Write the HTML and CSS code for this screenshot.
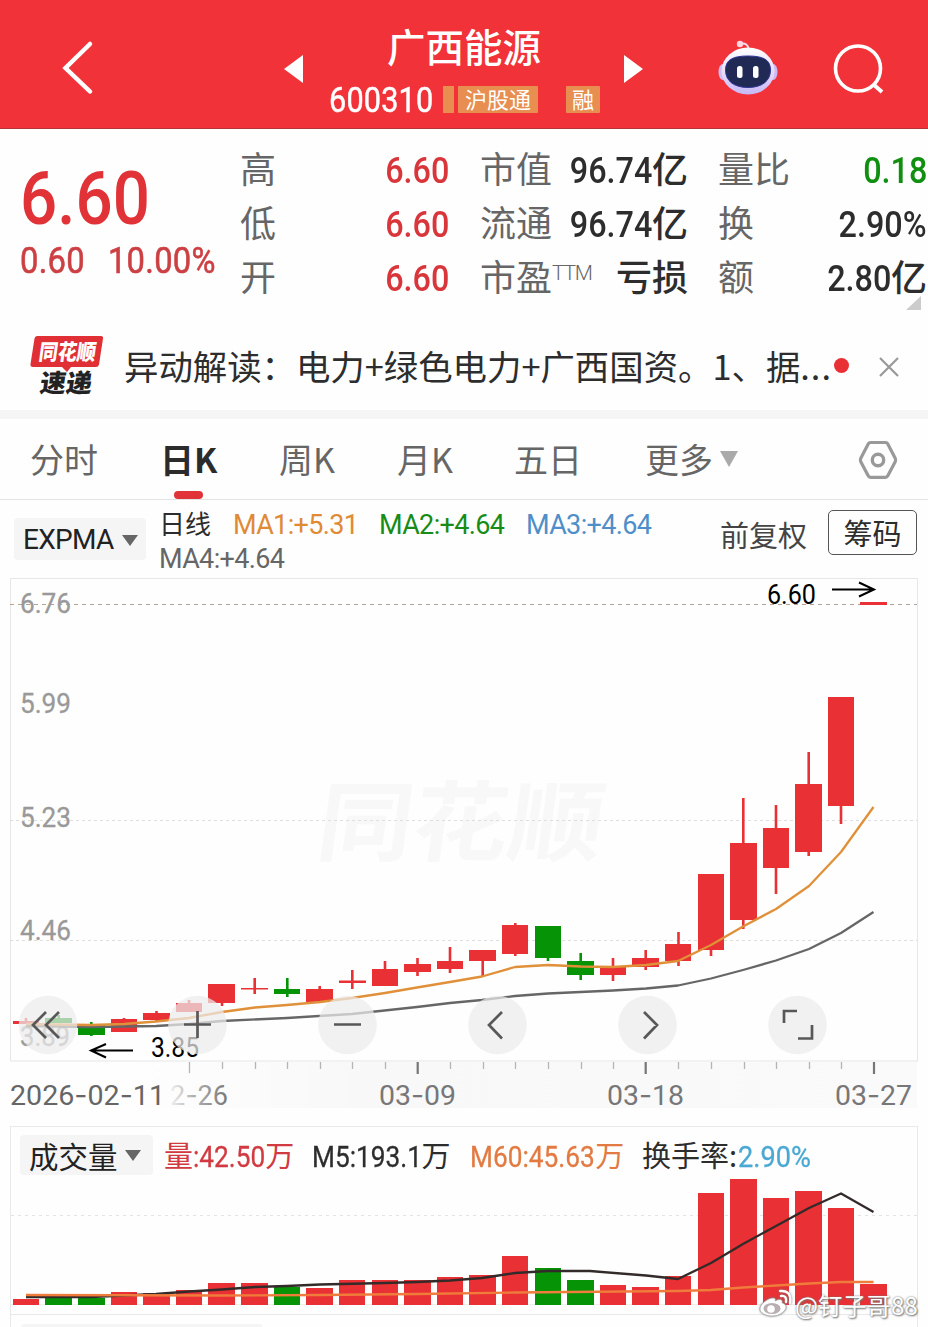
FILE: index.html
```html
<!DOCTYPE html>
<html lang="zh-CN">
<head>
<meta charset="utf-8">
<title>广西能源 600310</title>
<link rel="stylesheet" href="styles.css">
</head>
<body>
<div class="app">
<header class="top">
  <svg class="back" viewBox="0 0 40 60"><path d="M33 7 8.500 31 33 54.500" fill="none" stroke="#fff" stroke-width="4.500" stroke-linecap="round"/></svg>
  <svg class="prev" viewBox="0 0 20 28"><path d="M19 0v28L0 14z" fill="#fff"/></svg>
  <div class="title">
    <h1>广西能源</h1>
    <div class="sub"><span class="code">600310</span><i class="bar"></i><span class="tag wide">沪股通</span><span class="tag">融</span></div>
  </div>
  <svg class="next" viewBox="0 0 20 28"><path d="M0 0v28l19-14z" fill="#fff"/></svg>
  <svg class="robot" viewBox="0 0 60 56">
    <defs><linearGradient id="shell" x1="0" y1="0" x2="0" y2="1"><stop offset="0" stop-color="#fff"/><stop offset=".6" stop-color="#e4d6f6"/><stop offset="1" stop-color="#c4b8f8"/></linearGradient></defs>
    <path d="M22 4q8-2 9 6" fill="none" stroke="#f8dbe9" stroke-width="2"/><circle cx="22" cy="4" r="3.200" fill="#ffd3df"/>
    <ellipse cx="5" cy="32" rx="4.500" ry="8" fill="#cdbcf4"/><ellipse cx="55" cy="32" rx="4.500" ry="8" fill="#cdbcf4"/>
    <ellipse cx="30" cy="31" rx="26.500" ry="23.500" fill="url(#shell)"/>
    <path d="M7.500 30C7.500 19 16 16 30 16s22.500 3 22.500 14S44 47.500 30 47.500 7.500 41 7.500 30z" fill="#202a55" stroke="#30369a"/>
    <rect x="19" y="26" width="5.500" height="12" rx="2.500" fill="#fff"/><rect x="35" y="26" width="5.500" height="12" rx="2.500" fill="#fff"/>
  </svg>
  <svg class="search" viewBox="0 0 52 52"><circle cx="25" cy="24.500" r="22.500" fill="none" stroke="#fff" stroke-width="3.600"/><path d="m40 40 9 8" stroke="#fff" stroke-width="4"/></svg>
</header>

<section class="quote">
  <div class="price">
    <div class="last">6.60</div>
    <div class="change"><span>0.60</span><span>10.00%</span></div>
  </div>
  <dl class="col c1">
    <dt>高</dt><dd class="up"><b>6.60</b></dd>
    <dt>低</dt><dd class="up"><b>6.60</b></dd>
    <dt>开</dt><dd class="up"><b>6.60</b></dd>
  </dl>
  <dl class="col c2">
    <dt>市值</dt><dd><b>96.74</b>亿</dd>
    <dt>流通</dt><dd><b>96.74</b>亿</dd>
    <dt>市盈<sup>TTM</sup></dt><dd>亏损</dd>
  </dl>
  <dl class="col c3">
    <dt>量比</dt><dd class="down"><b>0.18</b></dd>
    <dt>换</dt><dd><b>2.90%</b></dd>
    <dt>额</dt><dd><b>2.80</b>亿</dd>
  </dl>
  <i class="corner"></i>
</section>

<section class="news">
  <svg class="logo" viewBox="28 332 76 66">
    <path d="M37 336h64q2.500 0 2 2.500l-4 26q-.5 2.500-3 2.500H71l-4 5-5-5H33q-3 0-2.500-3l4-25.500q.5-2.500 2.500-2.500z" fill="#e03036"/>
    <text transform="translate(38 360) skewX(-8)" textLength="57" lengthAdjust="spacingAndGlyphs" class="logo-a">同花顺</text>
    <text transform="translate(39 392) skewX(-8)" textLength="52" lengthAdjust="spacingAndGlyphs" class="logo-b">速递</text>
  </svg>
  <p>异动解读：电力+绿色电力+广西国资。1、据<span class="dots">...</span></p>
  <i class="dot"></i>
  <svg class="close" viewBox="0 0 22 22"><path d="m2 2 18 18M20 2 2 20" stroke="#999" stroke-width="2.200"/></svg>
</section>

<nav class="tabs">
  <span class="t1">分时</span><span class="t2 on">日K</span><span class="t3">周K</span><span class="t4">月K</span><span class="t5">五日</span><span class="t6">更多<i></i></span>
  <svg class="gear" viewBox="0 0 40 40"><path d="M12.500 2.500h15q1.500 0 2.300 1.400l7.400 14.300q.8 1.800 0 3.600l-7.400 14q-.8 1.500-2.300 1.500h-15q-1.500 0-2.300-1.500L2.800 21.800q-.8-1.800 0-3.600l7.400-14.300q.8-1.400 2.300-1.400z" fill="none" stroke="#999" stroke-width="3.200"/><circle cx="20" cy="20" r="5.700" fill="none" stroke="#999" stroke-width="3.400"/></svg>
</nav>

<section class="indicator">
  <div class="chip expma">EXPMA<i></i></div>
  <div class="ma">
    <span class="day">日线</span><span class="m1">MA1:+5.31</span><span class="m2">MA2:+4.64</span><span class="m3">MA3:+4.64</span><span class="m4">MA4:+4.64</span>
  </div>
  <span class="adj">前复权</span>
  <span class="btn">筹码</span>
</section>

<svg class="kline" viewBox="0 578 928 548">
  <defs>
    <linearGradient id="fade" x1="0" y1="0" x2="1" y2="0"><stop offset="0" stop-color="#888" stop-opacity=".1"/><stop offset=".4" stop-color="#888" stop-opacity=".65"/><stop offset="1" stop-color="#777"/></linearGradient>
    <linearGradient id="shade" x1="0" y1="0" x2="1" y2="0"><stop offset="0" stop-color="#f8f8f8" stop-opacity="0"/><stop offset=".3" stop-color="#f8f8f8"/><stop offset="1" stop-color="#fafafa"/></linearGradient>
  </defs>
  <rect x="130" y="1062" width="787" height="46" fill="url(#shade)"/>
  <text class="mark" transform="translate(314 854) skewX(-8)" textLength="286" lengthAdjust="spacingAndGlyphs">同花顺</text>
  <path d="M10.500 1061V578.500H917.500V1061z" fill="none" stroke="#e6e6e6"/>
  <path d="M10 604.500H917" stroke="#b5a294" stroke-dasharray="4 4"/>
  <path d="M10 820.500H917M10 940.500H917" stroke="#dedede" stroke-dasharray="3 3"/>
  <g class="axis">
    <text x="20" y="613" textLength="51" lengthAdjust="spacingAndGlyphs">6.76</text><text x="20" y="713" textLength="51" lengthAdjust="spacingAndGlyphs">5.99</text><text x="20" y="827" textLength="51" lengthAdjust="spacingAndGlyphs">5.23</text><text x="20" y="940" textLength="51" lengthAdjust="spacingAndGlyphs">4.46</text><text x="20" y="1046" textLength="50" lengthAdjust="spacingAndGlyphs">3.89</text>
  </g>
  <g stroke="#e93034" stroke-width="2.600">
    <path d="M26 1018V1022M124 1018V1030M156.500 1011V1021M189 1000V1010M222 990V1006M254.700 978V994M319.700 986V1000M352.300 970V989M385 961V980M417.500 958V976M450 947V973M482.700 955V976M515.300 923V956M613 958V981M645.700 950V970M678.500 932V966M711 930V956M743.300 798V929M776 805V894M808.700 752V856M841 780V824"/>
  </g>
  <path d="M58.700 1015V1020M91.300 1022V1036M287.300 978V997M548 940V961M580.700 953V980" stroke="#069406" stroke-width="2.600"/>
  <path fill="#e93034" d="M13 1021h26v3H13zM111 1019h26v13h-26zM143 1013h27v7h-27zM176 1003h26v9h-26zM208 984h27v19h-27zM241 988h27v1.500h-27zM306 989h27v13h-27zM339 980.500h27v2.500h-27zM372 969h26v17h-26zM404 964h27v8h-27zM437 961h26v8h-26zM469 950h27v11h-27zM502 925h26v29h-26zM600 966h26v9h-26zM632 958h27v9h-27zM665 944h26v17h-26zM698 874h26v76h-26zM730 843h27v77h-27zM763 828h26v40h-26zM795 784h27v68h-27zM828 697h26v109h-26zM860 602h27v3h-27z"/>
  <path fill="#069406" d="M45 1018h27v5H45zM78 1024h27v11H78zM274 989h26v5h-26zM535 926h26v32h-26zM567 961h27v14h-27z"/>
  <path class="line" stroke="#666" d="M26 1026 91 1027 156 1026 189 1024 222 1021 287 1018 352 1014 417 1007 450 1003 482 1000 515 996 548 993.500 613 990.500 646 988.500 678 985.500 711 978.500 743 970 776 960.500 809 949 841 933 873.500 912"/>
  <path class="line" stroke="#e09038" d="M26 1024 91 1025 124 1024 156 1021.500 189 1018 222 1012 255 1007.500 287 1005 320 1002 352 998 385 993 417 987.500 450 982 482 976.500 515 967 548 965 581 966.500 613 967 646 965 678 961 711 945 743 926.500 776 909 809 886 841 852 873.500 807"/>
  <g class="note"><text x="767" y="604" textLength="49" lengthAdjust="spacingAndGlyphs">6.60</text><text x="151" y="1057" textLength="48" lengthAdjust="spacingAndGlyphs">3.85</text></g>
  <path d="M832 589.500H873M859 582.500 874 589.500 859 596.500M133 1050.500H92M106 1044 91 1050.500 106 1057.500" fill="none" stroke="#000" stroke-width="2"/>
  <path d="M222.500 1062v7M255.500 1062v7M287.500 1062v7M320.500 1062v7M352.500 1062v7M385.500 1062v7M450.500 1062v7M483.500 1062v7M515.500 1062v7M548.500 1062v7M581.500 1062v7M613.500 1062v7M678.500 1062v7M711.500 1062v7M744.500 1062v7M776.500 1062v7M809.500 1062v7M841.500 1062v7M189.500 1062v11" stroke="#b5b5b5" stroke-width="1.300"/>
  <path d="M417.700 1062v12M645.700 1062v12M874 1062v12" stroke="#777" stroke-width="2.200"/>
  <g class="dates">
    <text x="10" y="1105" textLength="155" lengthAdjust="spacingAndGlyphs" fill="#666">2026<tspan>-</tspan>02<tspan>-</tspan>11</text>
    <text x="170" y="1105" textLength="58" lengthAdjust="spacingAndGlyphs" fill="url(#fade)">2<tspan>-</tspan>26</text>
    <text x="379" y="1105" textLength="77" lengthAdjust="spacingAndGlyphs">03<tspan>-</tspan>09</text>
    <text x="607" y="1105" textLength="77" lengthAdjust="spacingAndGlyphs">03<tspan>-</tspan>18</text>
    <text x="835" y="1105" textLength="77" lengthAdjust="spacingAndGlyphs">03<tspan>-</tspan>27</text>
  </g>
  <g fill="#ebebeb" fill-opacity=".72"><circle cx="48" cy="1025" r="29.300"/><circle cx="197.500" cy="1025" r="29.300"/><circle cx="347.500" cy="1025" r="29.300"/><circle cx="497.500" cy="1025" r="29.300"/><circle cx="647.500" cy="1025" r="29.300"/><circle cx="797.500" cy="1025" r="29.300"/></g>
  <path d="M46 1012 33 1025 46 1038M59 1012 46 1025 59 1038M184 1024.500H211M197.500 1011V1038M334 1024.500H361M502 1012 489 1025 502 1038.500M644 1012 657 1025 644 1038.500M784 1023V1011H797M812 1025V1038.500H798" fill="none" stroke="#585858" stroke-width="2.700"/>
</svg>

<section class="volume">
  <div class="legend">
    <div class="chip">成交量<i></i></div>
    <span class="v1">量<b>:42.50</b>万</span><span class="v2"><b>M5:193.1</b>万</span><span class="v3"><b>M60:45.63</b>万</span><span class="v4">换手率:</span><span class="v5"><b>2.90%</b></span>
  </div>
  <svg class="bars" viewBox="11 1176 906 138">
    <path d="M11 1215.500H917" stroke="#e3e3e3" stroke-dasharray="3 4"/>
    <path d="M11 1304.500H917" stroke="#efefef"/>
    <path fill="#e93034" d="M13 1299h26v6H13zM111 1292h26v13h-26zM143 1293h27v12h-27zM176 1290h26v15h-26zM208 1283h27v22h-27zM241 1283h27v22h-27zM306 1288h27v17h-27zM339 1280h26v25h-26zM372 1280h26v25h-26zM404 1280h27v25h-27zM437 1277h26v28h-26zM469 1275h27v30h-27zM502 1256h26v49h-26zM600 1285h26v20h-26zM632 1287h27v18h-27zM665 1276h26v29h-26zM698 1193h26v112h-26zM730 1179h27v126h-27zM763 1198h26v107h-26zM795 1191h27v114h-27zM828 1208h26v97h-26zM860 1284h27v21h-27z"/>
    <path fill="#069406" d="M45 1298h27v7H45zM78 1298h27v7H78zM274 1287h26v18h-26zM535 1268h26v37h-26zM567 1280h27v25h-27z"/>
    <path class="line" stroke="#332a2a" d="M26 1297H91L156 1294 189 1291.500 222 1289.500 255 1287 287 1286 320 1284.500 385 1283 417 1282 450 1280.500 482 1278 515 1273 548 1271 590 1271 646 1275.500 678 1279 711 1263 743 1244 776 1226 809 1208 841 1193.500 873.500 1212"/>
    <path class="line" stroke="#f07c3c" d="M26 1295 222 1295.500 320 1295 417 1294 515 1292.500 678 1291 711 1290 743 1287.500 776 1285.500 809 1283.500 841 1282 873.500 1282"/>
  </svg>
  <div class="weibo">
    <svg viewBox="0 0 34 28"><g fill="#fff" stroke="#999" stroke-width=".6"><path d="M14 9c-5 0-13 6-13 11 0 4 6 7 12 7 8 0 14-5 14-9 0-3-3-4-4-4 1-3-1-5-7-2 1-2 0-3-2-3z"/></g><ellipse cx="13" cy="19.500" rx="8.500" ry="5.500" fill="#b9aeb0"/><circle cx="12" cy="20" r="3.800" fill="#fff"/><path d="M22 7q6-1 5 6M21 2q12-1 10 12" fill="none" stroke="#fff" stroke-width="2.400" stroke-linecap="round"/></svg><span>@钉子哥88</span>
  </div>
</section>
<section class="panel"><i></i></section>
</div>
</body>
</html>
```
FILE: styles.css
```css
* { box-sizing: border-box; margin: 0; padding: 0; }
body { background: #fefefe; font-family: "Noto Sans CJK SC", sans-serif; color: #2d2d2d; }
i { font-style: normal; display: block; }
svg { display: block; flex: none; }
.app { width: 928px; height: 1327px; overflow: hidden; display: flex; flex-direction: column; white-space: nowrap; }
.app > * { flex: none; }

.top { height: 129px; background: #f13239; color: #fff; display: flex; align-items: center; border-bottom: 1px solid #b5343a; }
.back { width: 40px; height: 60px; margin: 5px 0 0 57px; }
.prev { width: 20px; height: 28px; margin: 10px 0 0 187px; }
.title { width: 320px; height: 128px; padding-top: 20px; }
.title h1 { font-size: 38.5px; font-weight: 500; line-height: 50px; text-align: center; }
.sub { display: flex; height: 27px; margin: 16px 0 0 25px; }
.code { font: 400 35px/29px Roboto, sans-serif; width: 114px; letter-spacing: .2px; transform: scaleX(.875); transform-origin: left; -webkit-text-stroke: .5px #fff; }
.bar { width: 11px; background: #e88e50; margin-right: 4px; }
.tag { width: 34px; background: #e88e50; border-radius: 1px; font-size: 22px; line-height: 24px; text-align: center; margin-left: 28px; }
.tag.wide { width: 80px; margin-left: 0; }
.next { width: 20px; height: 28px; margin-top: 10px; }
.robot { width: 60px; height: 56px; margin: 8px 0 0 74px; }
.search { width: 52px; height: 52px; margin: 12px 0 0 55px; }

.quote { height: 194px; display: flex; padding-top: 14px; position: relative; }
.quote b, .legend b { font-family: Roboto, sans-serif; font-weight: 500; display: inline-block; }
.price { width: 240px; padding: 18px 0 0 20px; color: #e03237; font-family: Roboto, sans-serif; font-weight: 500; }
.last { font-size: 74px; line-height: 76px; transform: scaleX(.885); transform-origin: left; }
.change { display: flex; gap: 26px; font-size: 37px; line-height: 42px; margin-top: 3px; transform: scaleX(.885); transform-origin: left; color: #cc4044; font-weight: 400; letter-spacing: .3px; -webkit-text-stroke: .6px; }
.col { display: grid; grid-template-columns: auto 1fr; grid-auto-rows: 54px; line-height: 48px; font-size: 36px; }
.col dt { color: #666; }
.col dd { text-align: right; font-weight: 500; }
.col b { font-size: 37px; transform: scaleX(.875); transform-origin: right; line-height: 46px; }
.c1 { width: 209px; }
.c2 { width: 208px; margin-left: 31px; }
.c3 { width: 209px; margin-left: 30px; }
.up { color: #d9363b; }
.down { color: #118f11; }
.quote sup { font: 300 21px/20px Roboto, sans-serif; vertical-align: 11px; letter-spacing: -1.3px; }
.c2 dt { width: 0; }
.corner { position: absolute; left: 906px; top: 167px; width: 15px; height: 14px; background: #ccc; clip-path: polygon(100% 0, 100% 100%, 0 100%); }

.news { height: 87px; display: flex; align-items: center; padding-left: 28px; }
.logo { width: 76px; height: 66px; margin-top: -4px; overflow: visible; }
.logo-a { font-size: 22px; font-weight: 900; fill: #fff; }
.logo-b { font-size: 25px; font-weight: 900; fill: #222; }
.news p { font-size: 34.4px; line-height: 60px; margin: -3px 0 0 20px; width: 705px; }
.dots { letter-spacing: 1px; }
.dot { width: 15px; height: 15px; border-radius: 50%; background: #e93034; margin: -2px 0 0 5px; }
.close { width: 22px; height: 22px; margin-left: 29px; }

.tabs { height: 90px; border-top: 9px solid #f5f5f5; border-bottom: 1px solid #e4e4e4; display: grid; grid-template-columns: 131px 118px 118px 117px 131px 214px 1fr; padding-left: 30px; font-size: 34px; line-height: 79px; color: #666; align-items: start; }
.on { color: #2b2b2b; font-weight: 700; position: relative; margin-left: -1px; }
.on::after { content: ""; position: absolute; left: 14px; top: 72px; width: 29px; height: 8px; border-radius: 4px; background: #e03439; }
.t6 { display: flex; align-items: center; gap: 7px; }
.t6 i { border: 9px solid transparent; border-top: 16px solid #aaa; border-bottom: 0; }
.gear { width: 40px; height: 40px; margin: 21px 0 0 -1px; }

.indicator { height: 78px; display: flex; font-size: 29px; }
.chip { background: #f5f5f5; border-radius: 4px; display: flex; align-items: center; color: #222; }
.chip i { border: 8px solid transparent; border-top: 11px solid #666; border-bottom: 0; }
.expma { width: 132px; height: 42px; margin: 18px 0 0 14px; padding: 2px 0 0 9px; gap: 8px; font: 400 28px/42px Roboto, sans-serif; letter-spacing: -.7px; }
.ma { width: 560px; padding: 8px 0 0 13px; display: grid; grid-template-columns: 74px 146px 147px 1fr; grid-template-rows: 34px 34px; font: 400 27px/35px Roboto, sans-serif; letter-spacing: -.65px; flex: none; }
.day { font-family: "Noto Sans CJK SC", sans-serif; font-size: 26px; line-height: 29px; letter-spacing: 0; }
.m1 { color: #e08a35; } .m2 { color: #178c17; } .m3 { color: #4f8fc9; }
.m4 { grid-column: 1 / 3; color: #666; }
.adj { width: 108px; line-height: 68px; margin-left: 14px; color: #444; flex: none; }
.btn { width: 89px; height: 45px; margin-top: 10px; border: 1px solid #555; border-radius: 5px; line-height: 43px; text-align: center; flex: none; }

.kline { width: 928px; height: 548px; }
.axis, .dates { font: 400 28.500px Roboto, sans-serif; fill: #999; stroke: #999; stroke-width: .3px; }
.dates { fill: #777; stroke: none; }
.dates tspan { font-family: Inter, sans-serif; }
.note { font: 400 27px Roboto, sans-serif; fill: #000; }
.mark { font-size: 87px; font-weight: 700; fill: #f8f8f8; }
.line { fill: none; stroke-width: 2.300px; stroke-linejoin: round; }

.volume { width: 908px; height: 188px; margin-left: 10px; border: 1px solid #e9e9e9; border-bottom: 0; position: relative; }
.legend { height: 49px; padding: 8px 0 0 9px; display: flex; font-size: 29px; line-height: 38px; }
.legend .chip { width: 133px; height: 40px; padding-left: 9px; gap: 7px; font-size: 29.500px; }
.legend b { font-weight: 400; -webkit-text-stroke: .3px; font-size: 29.5px; line-height: 36px; transform: scaleX(.89); transform-origin: left; margin-right: -11%; }
.v1 { width: 148px; margin-left: 11px; color: #d03a40; }
.v1 b { margin-right: -9px; }
.v2 { width: 158px; }
.v2 b { margin-right: -14px; }
.v3 { width: 172px; color: #e27a42; }
.v3 b { margin-right: -15px; }
.v4 { width: 96px; }
.v5 { color: #4aa8d2; }
.v5 b { margin-right: 0; transform: scaleX(.92); }
.bars { width: 906px; height: 138px; }
.weibo { position: absolute; left: 748px; top: 162px; display: flex; gap: 2px; font-size: 24.3px; line-height: 32px; color: #fff; text-shadow: 0 0 2px #777, 1px 1px 2px #777; }
.weibo svg { width: 34px; height: 28px; filter: drop-shadow(0 0 1px #777); }
.panel { width: 908px; height: 20px; margin-left: 10px; border: 1px solid #e9e9e9; border-bottom: 0; padding: 9px 0 0 10px; }
.panel i { width: 242px; height: 10px; background: #f5f5f5; border-radius: 4px 4px 0 0; }
```
